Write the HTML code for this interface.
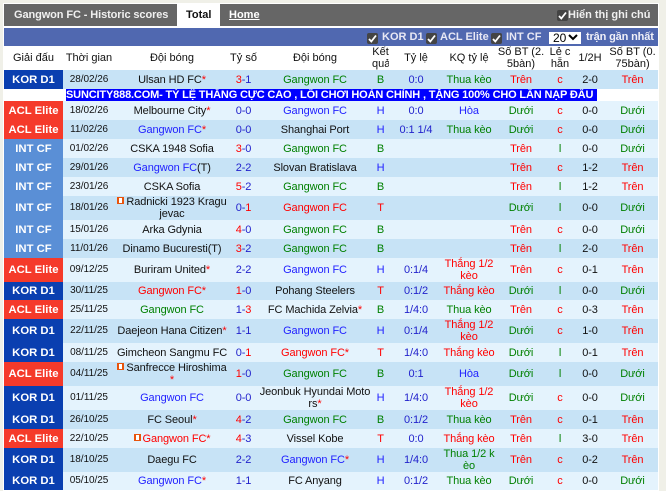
<!DOCTYPE html>
<html lang="vi"><head><meta charset="utf-8"><title>Gangwon FC - Historic scores</title>
<style>
html,body{margin:0;padding:0;background:#f0f0e8;width:666px;height:491px;overflow:hidden}
body{position:relative;font:11px/12px "Liberation Sans","Noto Sans CJK SC",sans-serif;color:#111}
.a{position:absolute;white-space:nowrap}
#wrap{position:absolute;left:3px;top:3px;width:656px;height:488px;background:#fff}
#top{left:4px;top:4px;width:654px;height:22px;background:#666}
#bar{left:4px;top:28px;width:654px;height:18px;background:#5068b0}
.w{color:#fff;font-weight:bold}
.cb{position:absolute;width:11px;height:11px;background:#444;border-radius:2px}
.cb svg{position:absolute;left:1px;top:1px}
table{position:absolute;left:4px;top:46px;width:654px;border-collapse:collapse;table-layout:fixed}
td{padding:0;text-align:center;white-space:nowrap;line-height:12px;letter-spacing:-.1px;position:relative;top:0}
tr.o td{background:#c7e3f6}
tr.e td{background:#e4f3fd}
tr.h td{background:#fff;letter-spacing:0}
td.l{color:#fff;font-weight:bold;font-size:11.3px;letter-spacing:0;background:#0a3fb0!important}
td.l.c{background:#f53a2a!important}
td.l.i{background:#5a8fd6!important}
td.d{font-size:10px;letter-spacing:-.05px}
tr.ad td{background:#fff;line-height:0;font-size:0}
.ad{left:66px;top:89px;width:531px;height:12px;background:#00f;color:#fff;font-weight:bold;line-height:12px;overflow:hidden;letter-spacing:-.16px}
.r{color:#f00}.g{color:#008000}.b{color:#22f}.t{color:#22c}.s{color:#22c}
.k{display:inline-block;width:7px;height:7px;background:#e8540c;position:relative;margin-right:2px;vertical-align:1px}
.k:after{content:"";position:absolute;left:2px;top:1px;width:3px;height:5px;background:#fff}
</style></head><body>
<div id="wrap"></div>
<div id="top" class="a"></div>
<div class="a" style="left:177px;top:4px;width:43px;height:22px;background:#fff"></div>
<div class="a w" style="left:14px;top:9px;color:#f0f0f0;letter-spacing:-.1px">Gangwon FC - Historic scores</div>
<div class="a" style="left:186px;top:9px;font-weight:bold">Total</div>
<div class="a w" style="left:229px;top:9px;text-decoration:underline">Home</div>
<div class="cb" style="left:557px;top:10px"><svg width="9" height="9" viewBox="0 0 9 9"><path d="M1 5l2.3 2.5L8 1.5" fill="none" stroke="#fff" stroke-width="1.8"/></svg></div>
<div class="a w" style="left:568px;top:9px;color:#f0f0f0">Hiển thị ghi chú</div>
<div id="bar" class="a"></div>
<div class="cb" style="left:367px;top:33px"><svg width="9" height="9" viewBox="0 0 9 9"><path d="M1 5l2.3 2.5L8 1.5" fill="none" stroke="#fff" stroke-width="1.8"/></svg></div>
<div class="a w" style="left:382px;top:31px;color:#e8e8f4">KOR D1</div>
<div class="cb" style="left:426px;top:33px"><svg width="9" height="9" viewBox="0 0 9 9"><path d="M1 5l2.3 2.5L8 1.5" fill="none" stroke="#fff" stroke-width="1.8"/></svg></div>
<div class="a w" style="left:440px;top:31px;color:#e8e8f4">ACL Elite</div>
<div class="cb" style="left:491px;top:33px"><svg width="9" height="9" viewBox="0 0 9 9"><path d="M1 5l2.3 2.5L8 1.5" fill="none" stroke="#fff" stroke-width="1.8"/></svg></div>
<div class="a w" style="left:506px;top:31px;color:#e8e8f4">INT CF</div>
<div class="a" style="left:549px;top:32px;width:32px;height:12px;background:#fff;color:#000;font-size:12px;line-height:13px;text-indent:4px">20<svg style="position:absolute;left:19px;top:2px" width="10" height="7" viewBox="0 0 10 7"><path d="M1 1l4 4 4-4" fill="none" stroke="#000" stroke-width="2"/></svg></div>
<div class="a w" style="left:586px;top:31px;color:#f0f0f8;letter-spacing:-.15px">trận gần nhất</div>
<table>
<colgroup><col style="width:59px"><col style="width:52px"><col style="width:114px"><col style="width:29px"><col style="width:114px"><col style="width:17px"><col style="width:54px"><col style="width:52px"><col style="width:52px"><col style="width:26px"><col style="width:34px"><col style="width:51px"></colgroup>
<tr class="h" style="height:24px"><td>Giải đấu</td><td>Thời gian</td><td>Đội bóng</td><td>Tỷ số</td><td>Đội bóng</td><td>Kết<br>quả</td><td>Tỷ lệ</td><td>KQ tỷ lệ</td><td>Số BT (2.<br>5bàn)</td><td>Lẻ c<br>hẵn</td><td>1/2H</td><td>Số BT (0.<br>75bàn)</td></tr>
<tr class="o" style="height:19px"><td class="l">KOR D1</td><td class="d">28/02/26</td><td>Ulsan HD FC<span class="r">*</span></td><td class="s"><span class="r">3</span>-1</td><td class="g">Gangwon FC</td><td class="g">B</td><td class="t">0:0</td><td class="g">Thua kèo</td><td class="r">Trên</td><td class="r">c</td><td>2-0</td><td class="r">Trên</td></tr>
<tr class="ad" style="height:12px"><td colspan="12"></td></tr>
<tr class="e" style="height:19px"><td class="l c">ACL Elite</td><td class="d">18/02/26</td><td>Melbourne City<span class="r">*</span></td><td class="s">0-0</td><td class="b">Gangwon FC</td><td class="b">H</td><td class="t">0:0</td><td class="b">Hòa</td><td class="g">Dưới</td><td class="r">c</td><td>0-0</td><td class="g">Dưới</td></tr>
<tr class="o" style="height:19px"><td class="l c">ACL Elite</td><td class="d">11/02/26</td><td class="b">Gangwon FC<span class="r">*</span></td><td class="s">0-0</td><td>Shanghai Port</td><td class="b">H</td><td class="t">0:1 1/4</td><td class="g">Thua kèo</td><td class="g">Dưới</td><td class="r">c</td><td>0-0</td><td class="g">Dưới</td></tr>
<tr class="e" style="height:19px"><td class="l i">INT CF</td><td class="d">01/02/26</td><td>CSKA 1948 Sofia</td><td class="s"><span class="r">3</span>-0</td><td class="g">Gangwon FC</td><td class="g">B</td><td></td><td></td><td class="r">Trên</td><td class="g">l</td><td>0-0</td><td class="g">Dưới</td></tr>
<tr class="o" style="height:19px"><td class="l i">INT CF</td><td class="d">29/01/26</td><td><span class="b">Gangwon FC</span>(T)</td><td class="s">2-2</td><td>Slovan Bratislava</td><td class="b">H</td><td></td><td></td><td class="r">Trên</td><td class="r">c</td><td>1-2</td><td class="r">Trên</td></tr>
<tr class="e" style="height:19px"><td class="l i">INT CF</td><td class="d">23/01/26</td><td>CSKA Sofia</td><td class="s"><span class="r">5</span>-2</td><td class="g">Gangwon FC</td><td class="g">B</td><td></td><td></td><td class="r">Trên</td><td class="g">l</td><td>1-2</td><td class="r">Trên</td></tr>
<tr class="o" style="height:24px"><td class="l i">INT CF</td><td class="d">18/01/26</td><td><span class="k"></span>Radnicki 1923 Kragu<br>jevac</td><td class="s">0-<span class="r">1</span></td><td class="r">Gangwon FC</td><td class="r">T</td><td></td><td></td><td class="g">Dưới</td><td class="g">l</td><td>0-0</td><td class="g">Dưới</td></tr>
<tr class="e" style="height:19px"><td class="l i">INT CF</td><td class="d">15/01/26</td><td>Arka Gdynia</td><td class="s"><span class="r">4</span>-0</td><td class="g">Gangwon FC</td><td class="g">B</td><td></td><td></td><td class="r">Trên</td><td class="r">c</td><td>0-0</td><td class="g">Dưới</td></tr>
<tr class="o" style="height:19px"><td class="l i">INT CF</td><td class="d">11/01/26</td><td>Dinamo Bucuresti(T)</td><td class="s"><span class="r">3</span>-2</td><td class="g">Gangwon FC</td><td class="g">B</td><td></td><td></td><td class="r">Trên</td><td class="g">l</td><td>2-0</td><td class="r">Trên</td></tr>
<tr class="e" style="height:24px"><td class="l c">ACL Elite</td><td class="d">09/12/25</td><td>Buriram United<span class="r">*</span></td><td class="s">2-2</td><td class="b">Gangwon FC</td><td class="b">H</td><td class="t">0:1/4</td><td class="r">Thắng 1/2<br>kèo</td><td class="r">Trên</td><td class="r">c</td><td>0-1</td><td class="r">Trên</td></tr>
<tr class="o" style="height:18px"><td class="l">KOR D1</td><td class="d">30/11/25</td><td class="r">Gangwon FC*</td><td class="s"><span class="r">1</span>-0</td><td>Pohang Steelers</td><td class="r">T</td><td class="t">0:1/2</td><td class="r">Thắng kèo</td><td class="g">Dưới</td><td class="g">l</td><td>0-0</td><td class="g">Dưới</td></tr>
<tr class="e" style="height:19px"><td class="l c">ACL Elite</td><td class="d">25/11/25</td><td class="g">Gangwon FC</td><td class="s">1-<span class="r">3</span></td><td>FC Machida Zelvia<span class="r">*</span></td><td class="g">B</td><td class="t">1/4:0</td><td class="g">Thua kèo</td><td class="r">Trên</td><td class="r">c</td><td>0-3</td><td class="r">Trên</td></tr>
<tr class="o" style="height:24px"><td class="l">KOR D1</td><td class="d">22/11/25</td><td>Daejeon Hana Citizen<span class="r">*</span></td><td class="s">1-1</td><td class="b">Gangwon FC</td><td class="b">H</td><td class="t">0:1/4</td><td class="r">Thắng 1/2<br>kèo</td><td class="g">Dưới</td><td class="r">c</td><td>1-0</td><td class="r">Trên</td></tr>
<tr class="e" style="height:19px"><td class="l">KOR D1</td><td class="d">08/11/25</td><td>Gimcheon Sangmu FC</td><td class="s">0-<span class="r">1</span></td><td class="r">Gangwon FC*</td><td class="r">T</td><td class="t">1/4:0</td><td class="r">Thắng kèo</td><td class="g">Dưới</td><td class="g">l</td><td>0-1</td><td class="r">Trên</td></tr>
<tr class="o" style="height:24px"><td class="l c">ACL Elite</td><td class="d">04/11/25</td><td><span class="k"></span>Sanfrecce Hiroshima<br><span class="r">*</span></td><td class="s"><span class="r">1</span>-0</td><td class="g">Gangwon FC</td><td class="g">B</td><td class="t">0:1</td><td class="b">Hòa</td><td class="g">Dưới</td><td class="g">l</td><td>0-0</td><td class="g">Dưới</td></tr>
<tr class="e" style="height:24px"><td class="l">KOR D1</td><td class="d">01/11/25</td><td class="b">Gangwon FC</td><td class="s">0-0</td><td>Jeonbuk Hyundai Moto<br>rs<span class="r">*</span></td><td class="b">H</td><td class="t">1/4:0</td><td class="r">Thắng 1/2<br>kèo</td><td class="g">Dưới</td><td class="r">c</td><td>0-0</td><td class="g">Dưới</td></tr>
<tr class="o" style="height:19px"><td class="l">KOR D1</td><td class="d">26/10/25</td><td>FC Seoul<span class="r">*</span></td><td class="s"><span class="r">4</span>-2</td><td class="g">Gangwon FC</td><td class="g">B</td><td class="t">0:1/2</td><td class="g">Thua kèo</td><td class="r">Trên</td><td class="r">c</td><td>0-1</td><td class="r">Trên</td></tr>
<tr class="e" style="height:19px"><td class="l c">ACL Elite</td><td class="d">22/10/25</td><td class="r"><span class="k"></span>Gangwon FC*</td><td class="s"><span class="r">4</span>-3</td><td>Vissel Kobe</td><td class="r">T</td><td class="t">0:0</td><td class="r">Thắng kèo</td><td class="r">Trên</td><td class="g">l</td><td>3-0</td><td class="r">Trên</td></tr>
<tr class="o" style="height:24px"><td class="l">KOR D1</td><td class="d">18/10/25</td><td>Daegu FC</td><td class="s">2-2</td><td class="b">Gangwon FC<span class="r">*</span></td><td class="b">H</td><td class="t">1/4:0</td><td class="g">Thua 1/2 k<br>èo</td><td class="r">Trên</td><td class="r">c</td><td>0-2</td><td class="r">Trên</td></tr>
<tr class="e" style="height:18px"><td class="l">KOR D1</td><td class="d">05/10/25</td><td class="b">Gangwon FC<span class="r">*</span></td><td class="s">1-1</td><td>FC Anyang</td><td class="b">H</td><td class="t">0:1/2</td><td class="g">Thua kèo</td><td class="g">Dưới</td><td class="r">c</td><td>0-0</td><td class="g">Dưới</td></tr>
</table>
<div class="a ad">SUNCITY888.COM- TỶ LỆ THẮNG CỰC CAO , LỐI CHƠI HOÀN CHỈNH , TẶNG 100% CHO LẦN NẠP ĐẦU</div>
</body></html>
